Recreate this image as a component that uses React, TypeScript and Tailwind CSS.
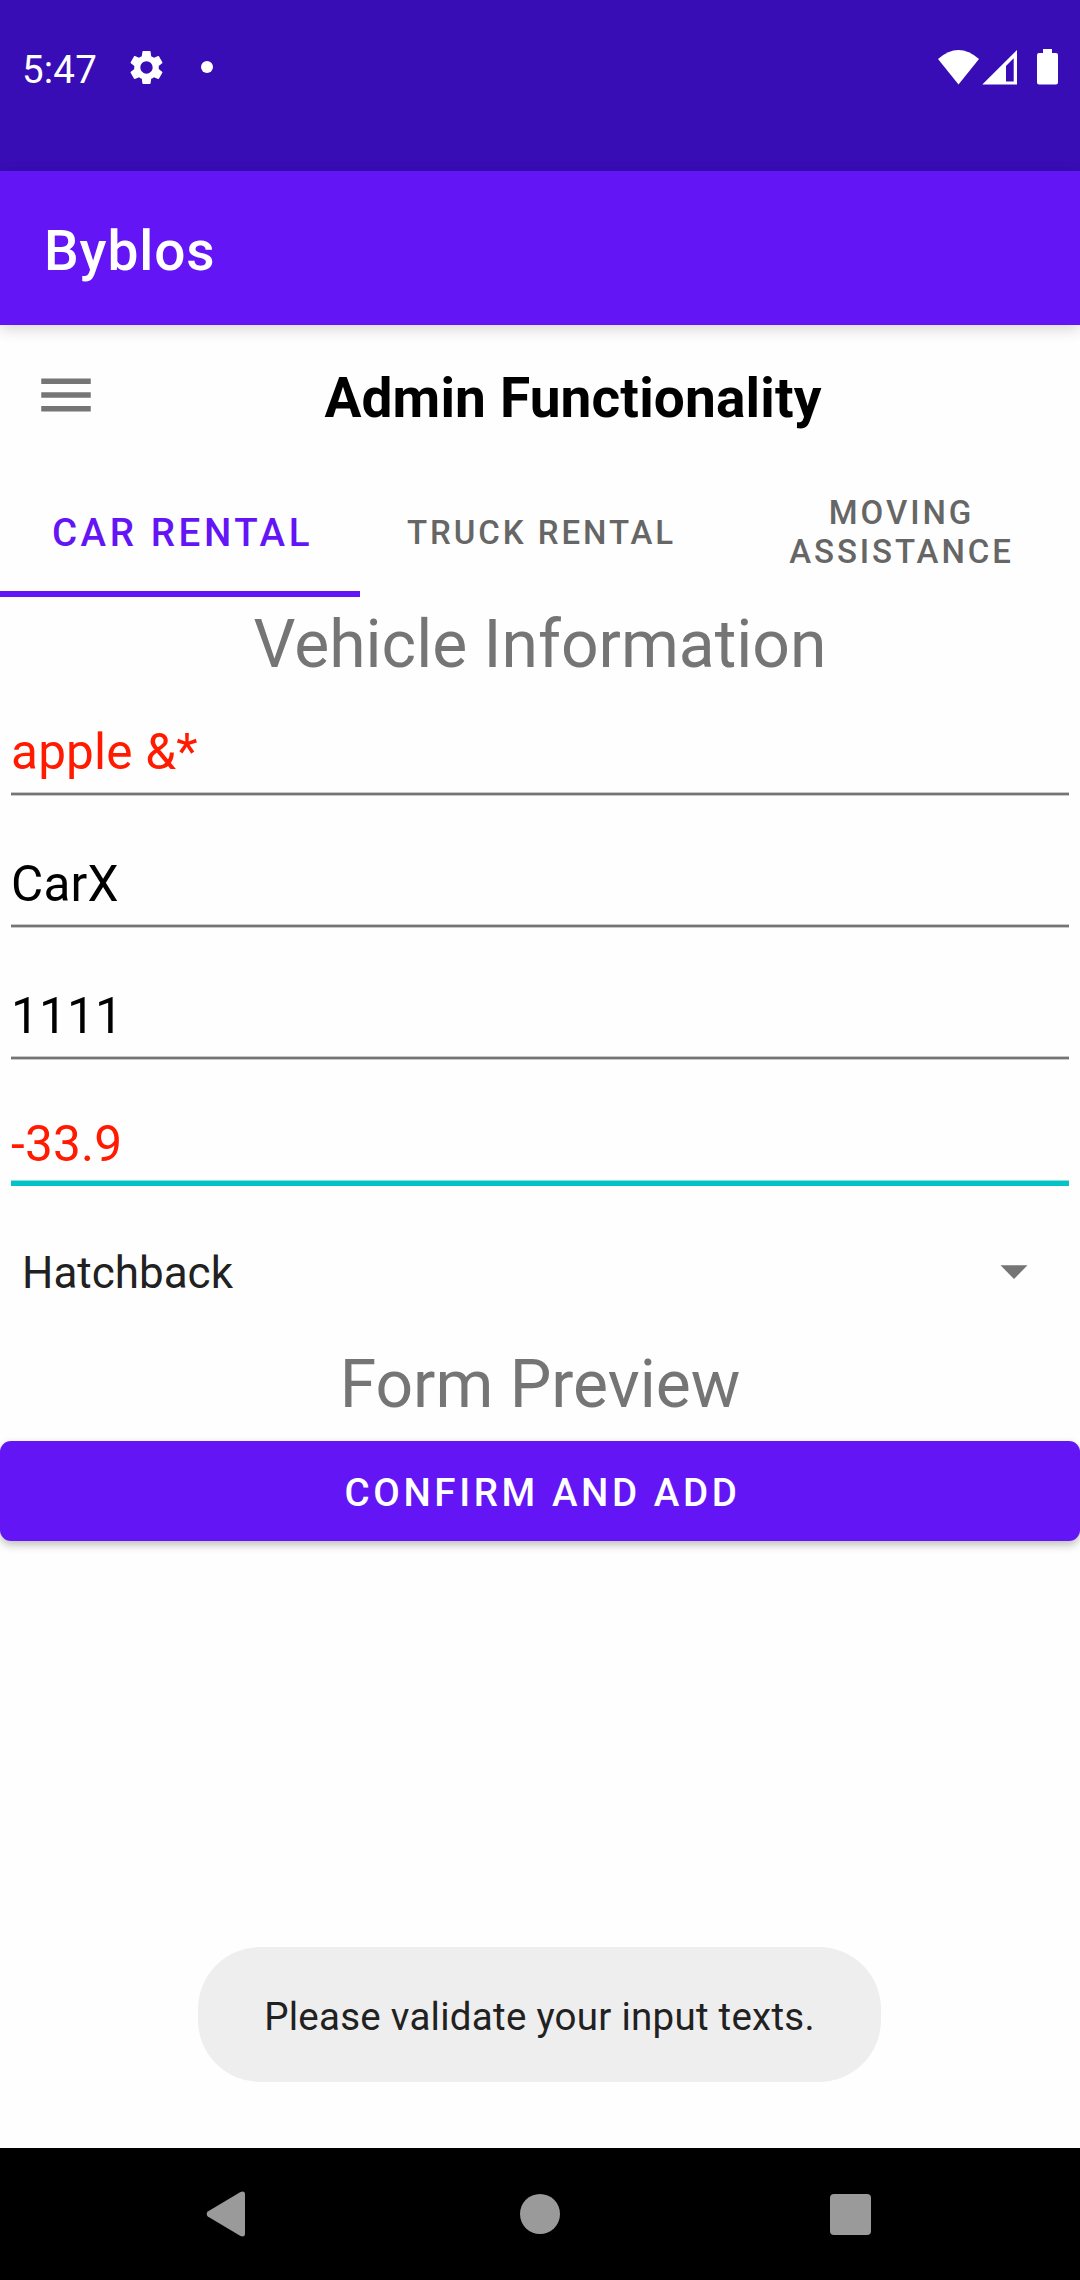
import React from "react";
import { MdMenu, MdSettings } from "react-icons/md";

function StatusBar() {
  return (
    <header className="h-[171px] bg-[#380db6] text-white">
      <div className="flex h-[134px] items-center pl-[22px] pr-[22px]">
        <span className="w-[104px] pt-[6px] text-[38.5px] leading-none tracking-[0.2px]">5:47</span>
        <MdSettings className="size-[41px]" />
        <span className="ml-[34px] size-3 rounded-full bg-white" />
        <svg className="ml-auto h-[36px] w-[120px]" viewBox="938 49 120 36" fill="currentColor">
          <path d="M938 59Q958.5 41 979 59L958.5 84.5Z" />
          <path
            fillRule="evenodd"
            d="M982.3 84.5L1017 50V84.5ZM1006 66V81.5H1013.7V58.3Z"
          />
          <path d="M1043 49H1052V53H1056Q1058 53 1058 55V82.5Q1058 84.5 1056 84.5H1039Q1037 84.5 1037 82.5V55Q1037 53 1039 53H1043Z" />
        </svg>
      </div>
    </header>
  );
}

function Tab({ label, active = false }: { label: string; active?: boolean }) {
  return (
    <button
      className={
        active
          ? "flex w-[360px] items-center justify-center border-b-[6px] border-[#6415f6] pl-[38px] pr-[33px] pt-[9px] text-[38.5px] font-medium leading-[45px] tracking-[3.6px] text-[#6415f6]"
          : "flex w-[360px] items-center justify-center pl-[36px] pr-[33px] pt-[2px] text-[33px] font-medium leading-[39px] tracking-[0.0893em] text-[#666666]"
      }
    >
      {label}
    </button>
  );
}

function SectionTitle({ children }: { children: React.ReactNode }) {
  return (
    <h2 className="h-[94px] text-center text-[66px] leading-[96px] text-[#757575]">{children}</h2>
  );
}

function Field({ value, invalid = false }: { value: string; invalid?: boolean }) {
  return (
    <div>
      <p className={invalid ? "leading-[82px] text-[#ff1a00]" : "leading-[82px] text-black"}>{value}</p>
      <div className="h-[2px] bg-[#757575] shadow-[0_1px_#c8c8c8,0_-1px_#c8c8c8]" />
    </div>
  );
}

export default function App() {
  return (
    <div className="relative flex h-[2280px] w-[1080px] flex-col overflow-hidden bg-[#fefefe] font-['Roboto',sans-serif]">
      <StatusBar />
      <div className="flex h-[154px] items-center bg-[#6415f6] pl-11 pt-[6px] text-[55px] font-medium tracking-[0.9px] text-white shadow-[0_4px_14px_rgba(0,0,0,0.16)]">
        Byblos
      </div>

      <div className="flex h-[140px] items-center px-[33px]">
        <MdMenu className="size-[66px] text-[#757575]" />
        <h1 className="flex-1 pt-[6px] text-center text-[55px] font-bold leading-none tracking-[0.15px] text-black">
          Admin Functionality
        </h1>
      </div>

      <nav className="flex h-[132px]">
        <Tab label="CAR RENTAL" active />
        <Tab label="TRUCK RENTAL" />
        <Tab label="MOVING ASSISTANCE" />
      </nav>

      <SectionTitle>Vehicle Information</SectionTitle>
      <div className="px-[11px] pt-5 text-[49.5px] tracking-[0.2px]">
        <div className="flex flex-col gap-12">
          <Field value="apple &*" invalid />
          <Field value="CarX" />
          <Field value="1111" />
        </div>
        <p className="mt-[47px] h-[75px] leading-[76px] text-[#ff1a00]">-33.9</p>
        <div className="h-[5px] bg-[#03c3c7] shadow-[0_-1px_#8fdfe1]" />
      </div>

      <div className="mt-5 flex h-[131px] items-center justify-between pl-[22px] pr-[52px]">
        <span className="pt-[3px] text-[44px] leading-none text-[#212121]">Hatchback</span>
        <svg className="h-[14px] w-[28px]" viewBox="0 0 28 14" fill="#757575">
          <path d="M0.5 0.3H27.5L14 14Z" />
        </svg>
      </div>

      <SectionTitle>Form Preview</SectionTitle>
      <button className="mt-[10px] h-[100px] rounded-[11px] bg-[#6415f6] pl-[5px] pt-[3px] text-[38.5px] font-medium tracking-[3.6px] text-white shadow-[0_4px_8px_rgba(0,0,0,0.25)]">
        CONFIRM AND ADD
      </button>

      <footer className="mt-auto flex h-[132px] items-center justify-between bg-black pl-[206px] pr-[209px]">
        <svg className="h-[46px] w-[40px]" viewBox="0 0 40 46" fill="#9a9a9a">
          <path d="M1.8 20.5Q-.5 23 1.8 25.5L34.5 45Q39 46.5 39 42.5V3.5Q39-.5 34.5 1Z" />
        </svg>
        <span className="ml-[3px] size-10 rounded-full bg-[#9a9a9a]" />
        <span className="size-[41px] rounded-[4px] bg-[#9a9a9a]" />
      </footer>

      <div className="absolute bottom-[198px] left-[198px] flex h-[135px] w-[683px] items-center justify-center rounded-[62px] bg-[#eeeeee] pt-[5px] text-[38.5px] tracking-[0.26px] text-[#212121]">
        Please validate your input texts.
      </div>
    </div>
  );
}
